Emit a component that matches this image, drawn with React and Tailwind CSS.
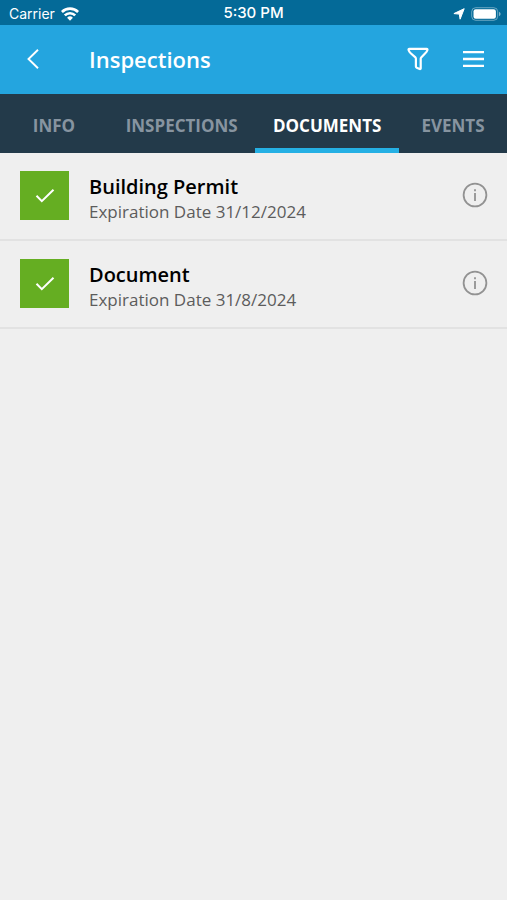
import { useState } from 'react';

/* ─── Data ─── */
const TABS = ['Info', 'Inspections', 'Documents', 'Events'];

const DOCUMENTS = [
  { id: 1, title: 'Building Permit', expires: '31/12/2024' },
  { id: 2, title: 'Document', expires: '31/8/2024' },
];

/* ─── Icons ─── */
const WifiIcon = () => (
  <svg className="w-[18px] h-[14px]" viewBox="0 0 18 14" fill="none" stroke="currentColor" strokeWidth="2.7">
    <path d="M.9 5a11.500 11.500 0 0 1 16.200 0" />
    <path d="M3.800 8.400a7.400 7.400 0 0 1 10.400 0" />
    <path d="M9 13.800l-2.900-3a4.100 4.100 0 0 1 5.800 0z" fill="currentColor" stroke="none" />
  </svg>
);

const LocationIcon = () => (
  <svg className="w-[12px] h-[12px]" viewBox="0 0 12 12" fill="currentColor" stroke="currentColor" strokeWidth="1" strokeLinejoin="round">
    <path d="M11.200.700L7.100 11.200 6.300 6.100.900 5.600z" />
  </svg>
);

const BatteryIcon = () => (
  <svg className="w-[30px] h-[14px]" viewBox="0 0 30 14" fill="none">
    <rect x="0.700" y="0.700" width="26" height="12.600" rx="4" stroke="currentColor" strokeOpacity="0.400" />
    <rect x="2.500" y="2.200" width="22.400" height="9.600" rx="2.200" fill="currentColor" />
    <path d="M28 4.800c2.100.800 2.100 3.600 0 4.400z" fill="currentColor" fillOpacity="0.500" />
  </svg>
);

const BackIcon = () => (
  <svg className="w-[12px] h-[20px]" viewBox="0 0 12 20" fill="none" stroke="currentColor" strokeWidth="1.900">
    <path d="M11 0.800L1.500 10 11 19.200" />
  </svg>
);

const FilterIcon = () => (
  <svg className="w-[22px] h-[24px]" viewBox="0 0 22 24" fill="none" stroke="currentColor" strokeWidth="2.200" strokeLinejoin="round">
    <path d="M2.400 1.800h17.200c.800 0 1.100.800.700 1.500-.500 1.200-1.300 2.200-2.300 3.200l-3.800 3.900c-.400.400-.500.800-.500 1.300v9.600c0 .600-.400.900-1 .700l-3-1.200c-.500-.200-.800-.600-.800-1.200v-7.900c0-.500-.200-.900-.500-1.300L4 6.500C3 5.500 2.200 4.500 1.700 3.300c-.400-.700-.100-1.500.700-1.500z" />
  </svg>
);

const MenuIcon = () => (
  <svg className="w-[21px] h-[18px]" viewBox="0 0 21 18" fill="none" stroke="currentColor" strokeWidth="2.300">
    <path d="M0 2.200h21M0 9h21M0 15.800h21" />
  </svg>
);

const CheckIcon = () => (
  <svg className="w-[20px] h-[16px]" viewBox="0 0 20 16" fill="none" stroke="currentColor" strokeWidth="2">
    <path d="M1.500 7.800l5.300 5.400L18.500 1.700" />
  </svg>
);

const InfoIcon = () => (
  <svg className="w-[26px] h-[26px]" viewBox="0 0 26 26" fill="none" stroke="currentColor" strokeWidth="1.800">
    <circle cx="13" cy="13" r="11.400" />
    <path d="M13 11v8M13 7.300v2" />
  </svg>
);

/* ─── Status bar ─── */
const StatusBar = () => (
  <div className="grid grid-cols-[1fr_auto_1fr] items-center h-[25px] pt-0.5 px-1.5 bg-[#046a98] text-white font-['Inter',sans-serif] text-[14px]">
    <div className="flex items-center gap-1.5 pl-[3px]">
      <span>Carrier</span>
      <WifiIcon />
    </div>
    <span className="text-[15px] font-medium">5:30 PM</span>
    <div className="flex items-center justify-end gap-1.5">
      <LocationIcon />
      <BatteryIcon />
    </div>
  </div>
);

/* ─── Document row ─── */
const DocumentRow = ({ doc }) => (
  <li className="flex items-start h-[88px] pt-[18px] px-[19px] border-b-2 border-[#e2e2e2]">
    <div className="flex items-center justify-center shrink-0 size-[49px] ml-px bg-[#65ae22] text-white">
      <CheckIcon />
    </div>
    <div className="flex-1 min-w-0 ml-5 pt-[3px]">
      <h2 className="text-[20px] leading-[26px] font-semibold text-black truncate">{doc.title}</h2>
      <p className="text-[17px] leading-6 text-[#5c5c5c] truncate">Expiration Date {doc.expires}</p>
    </div>
    <button type="button" aria-label={`Details of ${doc.title}`} className="shrink-0 mt-[11px] text-[#929292]">
      <InfoIcon />
    </button>
  </li>
);

/* ════════ MAIN ════════ */
const App = () => {
  const [activeTab, setActiveTab] = useState('Documents');

  return (
    <div className="min-h-screen bg-[#efefef] font-['Open_Sans','Noto_Sans',sans-serif]">
      <StatusBar />

      {/* Header */}
      <header className="flex items-center h-[69px] pb-0.5 pl-[27px] pr-[23px] bg-[#24a5df] text-white">
        <button type="button" aria-label="Back">
          <BackIcon />
        </button>
        <h1 className="flex-1 ml-[50px] pt-0.5 text-[22px] font-semibold">Inspections</h1>
        <div className="flex items-center gap-[34px]">
          <button type="button" aria-label="Filter">
            <FilterIcon />
          </button>
          <button type="button" aria-label="Menu">
            <MenuIcon />
          </button>
        </div>
      </header>

      {/* Tabs */}
      <nav className="flex h-[59px] overflow-hidden bg-[#233a4a]">
        {TABS.map(tab => (
          <button
            key={tab}
            type="button"
            onClick={() => setActiveTab(tab)}
            className={`grow min-w-[108px] px-4 pt-[9px] border-b-[5px] text-[17px] font-bold uppercase ${
              activeTab === tab ? 'border-[#25b0e4] text-white' : 'border-transparent text-[#8794a0]'
            }`}
          >
            {tab}
          </button>
        ))}
      </nav>

      {/* Documents */}
      {activeTab === 'Documents' && (
        <ul>
          {DOCUMENTS.map(doc => <DocumentRow key={doc.id} doc={doc} />)}
        </ul>
      )}
    </div>
  );
};

export default App;
